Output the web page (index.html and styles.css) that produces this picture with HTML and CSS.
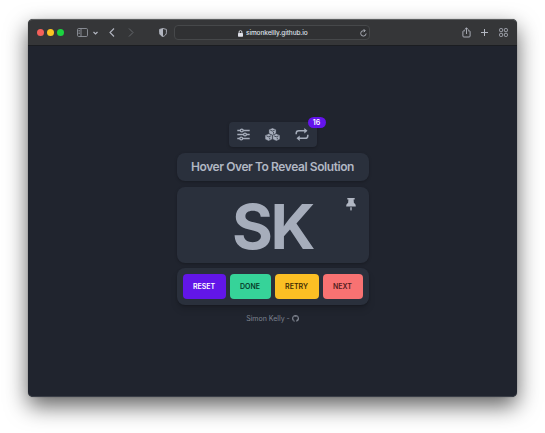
FILE: index.html
```html
<!DOCTYPE html>
<html lang="en">
<head>
<meta charset="utf-8">
<title>Simon Kelly</title>
<link rel="stylesheet" href="styles.css">
</head>
<body>
<div class="window">
  <header class="toolbar">
    <div class="lights"><i class="light red"></i><i class="light yellow"></i><i class="light green"></i></div>
    <svg class="sidebar" width="11" height="9" viewBox="0 0 11 9" fill="none" stroke="currentColor" stroke-width=".9"><rect x=".5" y=".5" width="10" height="8" rx="1.2"/><path d="M4 .5v8M1.5 2.5h1.3M1.5 4h1.3M1.5 5.5h1.3"/></svg>
    <svg class="down" width="5" height="4" viewBox="0 0 5 4" fill="none" stroke="currentColor" stroke-width="1.2"><path d="M.5 1l2 2 2-2"/></svg>
    <svg class="back" width="6" height="9" viewBox="0 0 6 9" fill="none" stroke="currentColor" stroke-width="1.1"><path d="M5 .5l-4 4 4 4"/></svg>
    <svg class="forward" width="6" height="9" viewBox="0 0 6 9" fill="none" stroke="currentColor" stroke-width="1"><path d="M1 .5l4 4-4 4"/></svg>
    <svg class="shield" width="8" height="9" viewBox="0 0 8 9"><path d="M4 .5L7.4 1.4v3.3C7.4 6.5 6 7.8 4 8.5 2 7.8.6 6.5.6 4.700V1.400z" fill="none" stroke="currentColor" stroke-width=".9"/><path d="M4 .5v8C2 7.800.6 6.500.6 4.700V1.400z" fill="currentColor"/></svg>
    <div class="address">
      <div class="site">
        <svg width="5" height="7" viewBox="0 0 5 7"><rect y="2.900" width="5" height="3.800" rx=".6" fill="currentColor"/><path d="M1.100 3.200V2a1.400 1.400 0 0 1 2.800 0v1.200" fill="none" stroke="currentColor" stroke-width=".9"/></svg>
        <span>simonkellly.github.io</span>
      </div>
      <svg class="reload" width="7" height="8" viewBox="0 0 7 8" fill="none" stroke="currentColor" stroke-width=".9"><path d="M6.100 4.500A2.700 2.700 0 1 1 3.500 1.700H5M3.700.2L5.200 1.700 3.700 3.200"/></svg>
    </div>
    <svg class="share" width="9" height="11" viewBox="0 0 9 11" fill="none" stroke="currentColor" stroke-width=".9"><path d="M3 3.800H1.700a.8.8 0 0 0-.8.8V9a1 1 0 0 0 1 1h5.200a1 1 0 0 0 1-1V4.600a.8.8 0 0 0-.8-.8H6M4.500 7V1M2.600 2.700L4.500.8l1.900 1.900"/></svg>
    <svg class="plus" width="7" height="7" viewBox="0 0 7 7" stroke="currentColor" stroke-width="1"><path d="M3.500 0v7M0 3.500h7"/></svg>
    <svg class="tabs" width="9" height="9" viewBox="0 0 9 9" fill="none" stroke="currentColor" stroke-width=".9"><rect x=".6" y=".6" width="3" height="3" rx=".8"/><rect x="5.400" y=".6" width="3" height="3" rx=".8"/><rect x=".6" y="5.400" width="3" height="3" rx=".8"/><rect x="5.400" y="5.400" width="3" height="3" rx=".8"/></svg>
  </header>
  <main class="page">
    <nav class="menu">
      <svg width="13" height="13" viewBox="0 0 13 13" fill="none" stroke="currentColor" stroke-width="1.300"><path d="M.3 2.500h3M6.300 2.500h6.400M.3 6.500h6.200M9.500 6.500h3.200M.3 10.500h2.400M5.700 10.500h7"/><circle cx="4.800" cy="2.500" r="1.400"/><circle cx="8" cy="6.500" r="1.400"/><circle cx="4.200" cy="10.500" r="1.400"/></svg>
      <svg width="15" height="13" viewBox="0 0 15 13" fill="currentColor" stroke="#2a303c" stroke-width=".4"><path d="M7.500 0l3.600 1.600v4L7.500 7.200 3.900 5.600v-4z"/><path d="M3.700 5.700l3.600 1.600v4L3.700 12.900.1 11.300v-4z"/><path d="M11.300 5.700l3.600 1.600v4l-3.600 1.600-3.600-1.600v-4z"/><path fill="none" stroke-width=".8" d="M5.300 2.200l2.200.9 2.200-.9M8.500 5.600V4M1.500 7.900l2.200.9 2.200-.9M4.700 11.300V9.700M9.100 7.900l2.200.9 2.200-.9M12.300 11.300V9.700"/></svg>
      <svg width="14" height="13" viewBox="0 0 14 13" fill="none" stroke="currentColor" stroke-width="1.500"><path d="M1.200 6.200V5.300A2.600 2.600 0 0 1 3.800 2.700h6.500M12.800 6.800v.9a2.600 2.600 0 0 1-2.600 2.600H3.700"/><path d="M9.300 0l3.200 2.700-3.200 2.700zM4.700 7.600l-3.200 2.700L4.700 13z" fill="currentColor" stroke="none"/></svg>
      <span class="badge">16</span>
    </nav>
    <section class="panel title">Hover Over To Reveal Solution</section>
    <section class="panel letters">
      <span>SK</span>
      <svg class="pin" width="10" height="13" viewBox="0 0 10 13" fill="currentColor"><path d="M1.300 0h7.400v1.600H7.600l.3 3.500C9.200 5.800 9.800 6.800 9.800 8.500H.2C.2 6.800.8 5.800 2.100 5.100l.3-3.500H1.300zM4.300 9.200h1.400v2.500L5 13l-.7-1.300z"/></svg>
    </section>
    <section class="panel actions">
      <button class="btn reset">RESET</button>
      <button class="btn done">DONE</button>
      <button class="btn retry">RETRY</button>
      <button class="btn next">NEXT</button>
    </section>
    <footer class="credit">
      <span>Simon Kelly -</span>
      <svg width="7" height="7" viewBox="0 0 16 16" fill="currentColor"><path d="M8 0C3.600 0 0 3.600 0 8c0 3.500 2.300 6.500 5.500 7.600.4.100.5-.2.500-.4v-1.500c-2.200.5-2.700-.9-2.700-.9-.4-.9-.9-1.200-.9-1.200-.7-.5.100-.5.100-.5.800.1 1.200.8 1.200.8.700 1.200 1.900.9 2.300.7.100-.5.300-.9.500-1.100-1.800-.2-3.600-.9-3.600-4 0-.9.300-1.600.8-2.100-.1-.2-.4-1 .1-2.100 0 0 .7-.2 2.200.8a7.500 7.500 0 0 1 4 0c1.500-1 2.200-.8 2.200-.8.500 1.100.2 1.900.1 2.100.5.600.8 1.300.8 2.100 0 3.100-1.900 3.700-3.600 3.900.300.3.500.8.500 1.500v2.300c0 .2.100.5.500.4A8 8 0 0 0 8 0z"/></svg>
    </footer>
  </main>
</div>
</body>
</html>
```
FILE: styles.css
```css
* { box-sizing: border-box; }
html, body { height: 100%; }
body {
  margin: 0;
  padding: 19px 28px 36px;
  background: #fff;
  font-family: Inter, "Liberation Sans", sans-serif;
  overflow: hidden;
}
svg { display: block; flex: none; }

.window {
  display: flex;
  flex-direction: column;
  width: 489px;
  height: 378px;
  border-radius: 5px;
  background: #20242e;
  box-shadow: 0 0 1px rgba(0, 0, 0, .5), 0 9px 22px rgba(0, 0, 0, .62);
}

.toolbar {
  display: flex;
  align-items: center;
  height: 27px;
  padding: 0 9px;
  border-top: 1px solid #5b5d5e;
  border-bottom: 1px solid #1b1d21;
  border-radius: 5px 5px 0 0;
  background: #353638;
  color: #b3b7c1;
}
.lights { display: flex; gap: 3px; }
.light { width: 7px; height: 7px; border-radius: 50%; }
.red { background: #f4605a; }
.yellow { background: #fbc423; }
.green { background: #1bd340; }
.sidebar { margin-left: 13px; color: #90949c; }
.down { margin-left: 5px; }
.back { margin-left: 11px; }
.forward { margin-left: 13px; color: #66686c; }
.shield { margin-left: 25px; }
.address {
  display: flex;
  align-items: center;
  width: 197px;
  height: 15px;
  margin-left: 7px;
  padding-right: 3px;
  border: 1px solid #46484a;
  border-radius: 4px;
  background: #303133;
}
.site {
  display: flex;
  flex: 1;
  align-items: center;
  gap: 3px;
  padding: 1px 0 0 63px;
  color: #dfe1e9;
  font-size: 6.5px;
  font-weight: 500;
  letter-spacing: -.1px;
  line-height: 9px;
  white-space: nowrap;
}
.reload { margin-right: -1px; }
.share { margin-left: 92px; }
.plus { margin-left: 10px; }
.tabs { margin-left: 11px; }

.page {
  display: flex;
  flex: 1;
  flex-direction: column;
  align-items: center;
  padding-top: 76px;
  border-bottom: 1px solid #3a3e47;
  border-radius: 0 0 5px 5px;
  color: #a6adbb;
}
.menu {
  position: relative;
  display: flex;
  align-items: center;
  justify-content: center;
  gap: 15px;
  width: 88px;
  height: 25px;
  border-radius: 4px;
  background: #2a303c;
  box-shadow: 0 1px 3px rgba(0, 0, 0, .25);
}
.badge {
  position: absolute;
  top: -5px;
  right: -9px;
  width: 18px;
  height: 11px;
  border-radius: 6px;
  background: #6414ec;
  color: #fff;
  font-size: 7px;
  font-weight: 600;
  line-height: 11px;
  text-align: center;
}
.panel {
  width: 192px;
  border-radius: 8px;
  background: #2a303c;
  box-shadow: 0 1px 3px rgba(0, 0, 0, .25);
}
.title {
  height: 28px;
  margin-top: 6px;
  color: #b1b7c3;
  font-size: 12px;
  font-weight: 600;
  letter-spacing: -.42px;
  line-height: 28px;
  text-align: center;
  white-space: nowrap;
}
.letters {
  position: relative;
  height: 76px;
  margin-top: 6px;
  font-size: 62.5px;
  font-weight: 700;
  line-height: 78px;
  letter-spacing: -2.500px;
  text-align: center;
}
.pin { position: absolute; top: 11px; right: 13px; color: #b1b7c3; }
.actions {
  display: flex;
  align-items: center;
  justify-content: center;
  gap: 4px;
  height: 37px;
  margin-top: 5px;
  box-shadow: 0 5px 7px rgba(0, 0, 0, .12), 0 1px 2px rgba(0, 0, 0, .2);
}
.btn {
  height: 25px;
  padding: 0;
  border: 0;
  border-radius: 4px;
  font: 600 7px/25px Inter, "Liberation Sans", sans-serif;
}
.reset { width: 43px; background: #6216e8; color: #fff; }
.done { width: 41px; background: #36d399; color: #063a28; }
.retry { width: 44px; background: #fbbf24; color: #422d05; }
.next { width: 40px; background: #f87272; color: #542020; }
.credit {
  display: flex;
  align-items: center;
  gap: 2px;
  margin-top: 9px;
  color: #7e838e;
  font-size: 7px;
  line-height: 9px;
}
```
